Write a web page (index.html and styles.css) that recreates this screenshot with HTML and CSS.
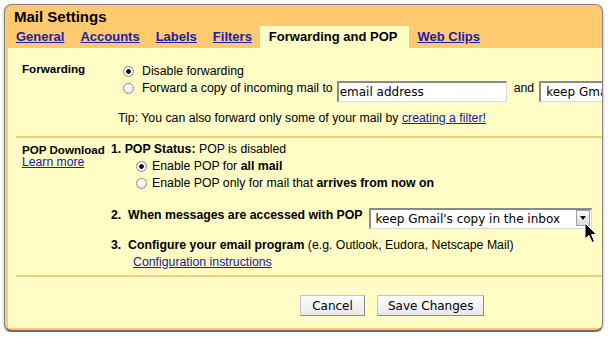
FILE: index.html
```html
<!DOCTYPE html>
<html lang="en">
<head>
  <meta charset="UTF-8">
  <title>Mail Settings</title>
  <link rel="stylesheet" href="styles.css">
</head>
<body>
  <div class="window">
    <div class="header">
      <div class="title">Mail Settings</div>
      <div class="tabs">
        <a class="tab" href="#">General</a>
        <a class="tab" href="#">Accounts</a>
        <a class="tab" href="#">Labels</a>
        <a class="tab" href="#">Filters</a>
        <span class="tab active">Forwarding and POP</span>
        <a class="tab" href="#">Web Clips</a>
      </div>
    </div>

    <div class="content">
      <div class="section fwd">
        <div class="label">Forwarding</div>
        <div class="body">
          <label class="row opt"><input type="radio" class="radio" name="fwd" checked>Disable forwarding</label>
          <div class="row opt">
            <input type="radio" class="radio" name="fwd">
            <span>Forward a copy of incoming mail to</span>
            <input type="text" class="field" value="email address">
            <span class="and">and</span>
            <span class="dropdown">
              <select><option>keep Gmail's copy in the inbox</option></select>
              <span class="arrow"></span>
            </span>
          </div>
          <div class="tip">Tip: You can also forward only some of your mail by <a class="link" href="#">creating a filter!</a></div>
        </div>
      </div>

      <div class="section pop">
        <div class="label">
          POP Download
          <a class="link learn" href="#">Learn more</a>
        </div>
        <div class="body">
          <div class="line"><b>1. POP Status:</b> POP is disabled</div>
          <label class="row opt"><input type="radio" class="radio" name="pop" checked>Enable POP for&nbsp;<b>all mail</b></label>
          <label class="row opt"><input type="radio" class="radio" name="pop">Enable POP only for mail that&nbsp;<b>arrives from now on</b></label>
          <div class="row step2">
            <b>2.&nbsp; When messages are accessed with POP</b>
            <span class="dropdown wide">
              <select><option>keep Gmail's copy in the inbox</option></select>
              <span class="arrow"></span>
            </span>
          </div>
          <div class="step3">
            <div class="line"><b>3.&nbsp; Configure your email program</b> (e.g. Outlook, Eudora, Netscape Mail)</div>
            <a class="link config" href="#">Configuration instructions</a>
          </div>
        </div>
      </div>

      <div class="actions">
        <button class="btn cancel">Cancel</button>
        <button class="btn">Save Changes</button>
      </div>
    </div>

    <svg class="cursor" width="14" height="22" viewBox="0 0 14 22">
      <path d="M1 1 L1 17 L5 13.5 L8 20.5 L10.5 19.5 L7.5 12.5 L12.5 12.5 Z" fill="#000" stroke="#fff" stroke-width="1"/>
    </svg>
  </div>
</body>
</html>
```

FILE: styles.css
```css
body {
  margin: 0;
  background: #fff;
  font-family: "Liberation Sans", Arial, sans-serif;
  color: #000;
}
.window {
  position: relative;
  width: 597px;
  margin: 4px 0 0 4px;
  border: 1px solid #858585;
  border-bottom: 2px solid #6c6c6c;
  border-radius: 8px;
  background: #fec96f;
  overflow: hidden;
  box-shadow: 0 1px 3px rgba(0, 0, 0, 0.35);
}
.header {
  padding-top: 3px;
}
.title {
  padding-left: 9px;
  font-size: 15px;
  font-weight: bold;
  line-height: 18px;
}
.tabs {
  display: flex;
  height: 22px;
  margin-left: 3px;
  line-height: 22px;
  font-size: 13px;
  font-weight: bold;
  white-space: nowrap;
}
.tab {
  padding: 0 8px;
  color: #2020a6;
  text-decoration: underline;
}
.tab.active {
  padding: 0 12px 0 9px;
  background: #fffcc6;
  color: #000;
  text-decoration: none;
}
.content {
  margin: 0 0 2px 3px;
  background: #fffcc6;
  font-size: 12.3px;
}
.section {
  display: grid;
  grid-template-columns: 89px 1fr;
  margin-left: 8px;
  padding-left: 6px;
  border-bottom: 2px solid #f0cf7c;
}
.label {
  font-size: 11.6px;
  font-weight: bold;
  line-height: 17px;
  white-space: nowrap;
}
.link {
  color: #2020a6;
  text-decoration: underline;
}
.learn {
  display: block;
  width: max-content;
  margin-top: -4px;
  font-size: 12.2px;
  font-weight: normal;
}
.row {
  display: flex;
  align-items: flex-start;
  white-space: nowrap;
  line-height: 17px;
}
.row > * {
  flex: none;
}
.line {
  line-height: 17px;
  white-space: nowrap;
}
.radio {
  appearance: none;
  width: 11px;
  height: 11px;
  margin: 3px 8px 0 0;
  border: 1px solid #8e8e8e;
  border-radius: 50%;
  background: radial-gradient(circle at 50% 30%, #fff 30%, #d6d6d6 100%);
  box-sizing: border-box;
}
.radio:checked {
  background: radial-gradient(circle, #111 0 2px, #fff 2.6px 40%, #d6d6d6 100%);
}

/* forwarding */
.fwd {
  padding-top: 12px;
  padding-bottom: 9px;
}
.fwd .body {
  padding-top: 3px;
}
.fwd .opt {
  padding-left: 12px;
}
.field {
  width: 170px;
  height: 21px;
  margin: 1px 0 0 4px;
  padding: 0 0 0 1px;
  box-sizing: border-box;
  border: 1px solid #dadada;
  border-top: 2px solid #8a8a8a;
  border-left: 2px solid #8a8a8a;
  background: #fff;
  font: 12px "DejaVu Sans", sans-serif;
  color: #000;
  outline: none;
}
.and {
  margin: 0 5px 0 7px;
}
.dropdown {
  display: flex;
  width: 223px;
  height: 21px;
  margin-top: 1px;
  box-sizing: border-box;
  border: 1px solid #dadada;
  border-top: 2px solid #8a8a8a;
  border-left: 2px solid #8a8a8a;
  background: #fff;
}
.dropdown select {
  flex: 1;
  appearance: none;
  border: 0;
  padding: 0 0 0 5px;
  background: transparent;
  font: 12px "DejaVu Sans", sans-serif;
  color: #000;
  outline: none;
}
.arrow {
  position: relative;
  width: 14px;
  height: 16px;
  margin: 0 1px 0 0;
  box-sizing: border-box;
  border: 1px solid #a0a0a0;
  background: linear-gradient(#fafafa, #dcdcdc);
}
.arrow::after {
  content: "";
  position: absolute;
  left: 3px;
  top: 5px;
  border-left: 3.5px solid transparent;
  border-right: 3.5px solid transparent;
  border-top: 4px solid #000;
}
.tip {
  margin: 8px 0 0 7px;
  line-height: 17px;
  white-space: nowrap;
}

/* pop */
.pop {
  padding-top: 3px;
  padding-bottom: 4px;
}
.pop .opt {
  padding-left: 25px;
}
.pop .radio {
  margin-right: 5px;
}
.step2 {
  margin-top: 15px;
}
.step2 .dropdown {
  margin-left: 6px;
}
.step3 {
  margin-top: 8px;
  line-height: 17px;
}
.config {
  display: block;
  padding-left: 22px;
  width: max-content;
}

/* buttons */
.actions {
  display: flex;
  gap: 12px;
  padding: 18px 0 12px 292px;
}
.btn {
  height: 21px;
  padding: 0 10px;
  border: 1px solid #c4c4c4;
  border-right-color: #8a8a8a;
  border-bottom-color: #8a8a8a;
  background: linear-gradient(#fdfdfd, #e9e9e9);
  font: 12px "DejaVu Sans", sans-serif;
  color: #000;
}
.cancel {
  min-width: 65px;
}
.cursor {
  position: absolute;
  left: 579px;
  top: 217px;
}
```
